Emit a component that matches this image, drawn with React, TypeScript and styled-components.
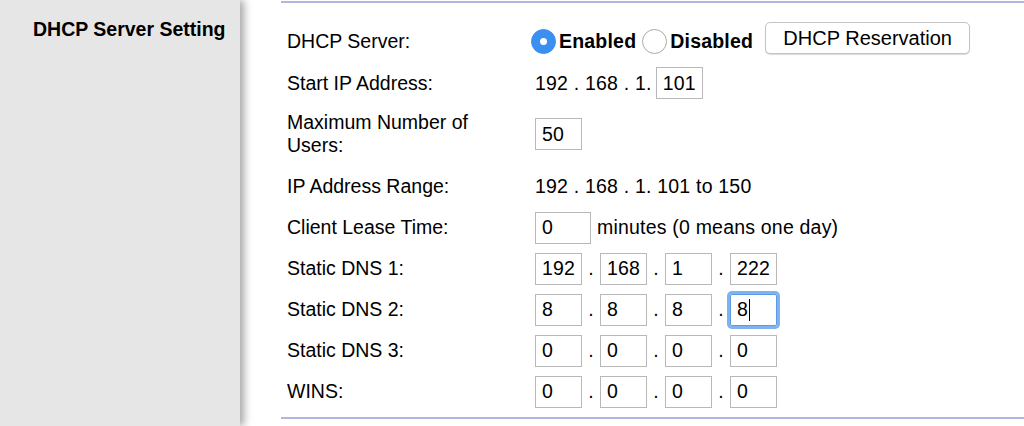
import React from "react";
import styled, { createGlobalStyle } from "styled-components";

const G = createGlobalStyle`
  body { margin: 0; font-family: "Liberation Sans", Arial, sans-serif; color: #000; }
`;
const Page = styled.div`display: flex; width: 1024px; height: 426px; overflow: hidden; background: #fff;`;
const Side = styled.div`
  width: 240px; flex: none; background: #e6e6e6; box-shadow: 4px 0 8px rgba(0,0,0,0.35);
  position: relative; z-index: 1; box-sizing: border-box; padding: 18px 0 0 33px;
  font-weight: bold; font-size: 19.5px;
`;
const Main = styled.div`flex: 1; padding: 0 0 0 41px;`;
const Frame = styled.div`
  border-top: 2px solid #b4b4e4; border-bottom: 2px solid #b4b4e4; margin-top: 1px;
  height: 418px; box-sizing: border-box; padding: 15px 0 0 6px;
`;
const Row = styled.div<{ h?: number }>`
  display: grid; grid-template-columns: 248px 1fr; align-items: center;
  height: ${p => p.h ?? 41}px; font-size: 19.5px;
`;
const Label = styled.div`line-height: 23px;`;
const Ctl = styled.div`display: flex; align-items: center; gap: 0; letter-spacing: 0.2px;`;
const Box = styled.div<{ w?: number; focus?: boolean }>`
  width: ${p => p.w ?? 47}px; height: 32px; box-sizing: border-box; border: 1px solid #b8b8b8;
  padding: 0 6px; display: flex; align-items: center; font-size: 19.5px;
  ${p => p.focus ? "box-shadow: 0 0 0 3px #7fb2ef; border-color:#5a9be8; border-radius:2px;" : ""}
`;
const Dot = styled.span`width: 18px; text-align: center;`;
const Radio = styled.span<{ on?: boolean }>`
  width: 25px; height: 25px; border-radius: 50%; box-sizing: border-box; margin: 0 3px 0 -4px; flex: none;
  background: ${p => p.on ? "#3b8ff0" : "#fff"}; border: 1px solid ${p => p.on ? "#3b8ff0" : "#aaa"};
  display: inline-flex; align-items: center; justify-content: center;
  &::after { content: ""; width: 7px; height: 7px; border-radius: 50%; background: ${p => p.on ? "#fff" : "transparent"}; }
`;
const RLabel = styled.span`font-weight: bold; font-size: 19.5px; margin-right: 10px;`;
const Btn = styled.button`
  margin-left: 2px; width: 205px; height: 32px; border: 1px solid #c4c4c4; border-radius: 5px;
  background: #fff; font: 20px "Liberation Sans", Arial, sans-serif; box-shadow: 0 1px 1px rgba(0,0,0,0.15);
  margin-top: -6px;
`;
const Caret = styled.span`display: inline-block; width: 1px; height: 22px; background: #000; margin-left: 1px;`;

const Quad = ({ v, f }: { v: string[]; f?: number }) => (
  <Ctl>
    {v.map((x, i) => (
      <React.Fragment key={i}>
        {i > 0 && <Dot>.</Dot>}
        <Box focus={f === i}>{x}{f === i && <Caret />}</Box>
      </React.Fragment>
    ))}
  </Ctl>
);

export default function App() {
  return (
    <Page>
      <G />
      <Side>DHCP Server Setting</Side>
      <Main>
        <Frame>
          <Row h={46}>
            <Label>DHCP Server:</Label>
            <Ctl><Radio on /><RLabel>Enabled</RLabel><Radio /><RLabel>Disabled</RLabel><Btn>DHCP Reservation</Btn></Ctl>
          </Row>
          <Row h={38}><Label>Start IP Address:</Label><Ctl><span style={{ marginRight: 4 }}>192 . 168 . 1.</span><Box>101</Box></Ctl></Row>
          <Row h={64}><Label>Maximum Number of<br />Users:</Label><Ctl><Box>50</Box></Ctl></Row>
          <Row><Label>IP Address Range:</Label><Ctl>192 . 168 . 1. 101 to 150</Ctl></Row>
          <Row><Label>Client Lease Time:</Label><Ctl><Box w={56}>0</Box><span style={{ marginLeft: 6 }}>minutes (0 means one day)</span></Ctl></Row>
          <Row><Label>Static DNS 1:</Label><Quad v={["192", "168", "1", "222"]} /></Row>
          <Row><Label>Static DNS 2:</Label><Quad v={["8", "8", "8", "8"]} f={3} /></Row>
          <Row><Label>Static DNS 3:</Label><Quad v={["0", "0", "0", "0"]} /></Row>
          <Row><Label>WINS:</Label><Quad v={["0", "0", "0", "0"]} /></Row>
        </Frame>
      </Main>
    </Page>
  );
}
